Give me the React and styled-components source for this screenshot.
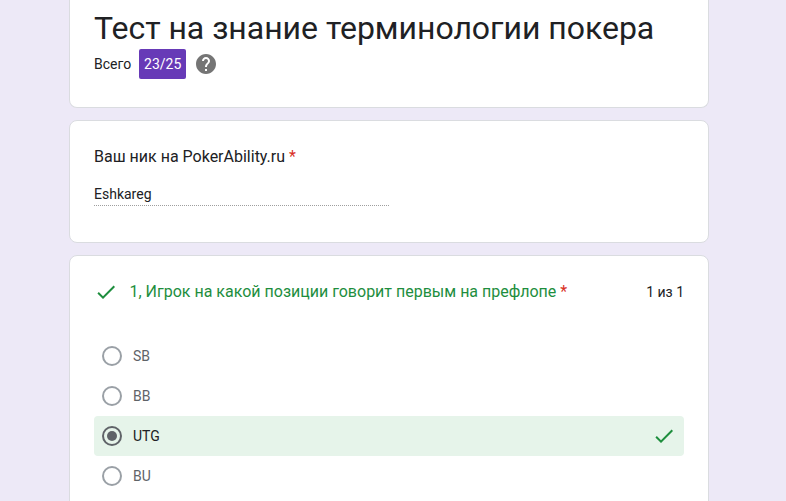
import React from 'react'
import styled, { createGlobalStyle } from 'styled-components'

const GlobalStyle = createGlobalStyle`
  html, body {
    margin: 0;
    height: 100%;
    overflow: hidden;
    background: #ede9f7;
  }
  body {
    font-family: Roboto, "Liberation Sans", sans-serif;
    color: #202124;
  }
`

const Page = styled.div`
  width: 640px;
  margin-left: 69px;
  display: flex;
  flex-direction: column;
  gap: 12px;
`

const Card = styled.section`
  background: #fff;
  border: 1px solid #dadce0;
  border-radius: 8px;
  box-sizing: border-box;
  padding: 0 24px;
`

const HeaderCard = styled(Card)`
  height: 108px;
  border-top: 0;
  border-radius: 0 0 8px 8px;
  padding-top: 9px;
`

const Title = styled.h1`
  margin: 0;
  font-size: 32px;
  font-weight: 400;
  line-height: 38px;
  letter-spacing: -0.03px;
`

const ScoreRow = styled.div`
  display: flex;
  align-items: center;
  margin-top: 2px;
  font-size: 14px;
`

const Badge = styled.span`
  height: 30px;
  width: 47px;
  margin-left: 8px;
  margin-right: 8px;
  display: flex;
  align-items: center;
  justify-content: center;
  border-radius: 2px;
  background: #673ab7;
  color: #fff;
`

const NameCard = styled(Card)`
  height: 123px;
  padding-top: 24px;
`

const Label = styled.div`
  font-size: 16px;
  line-height: 24px;
`

const Star = styled.span`
  color: #d93025;
`

const Answer = styled.div`
  width: 295px;
  height: 23px;
  margin-top: 13px;
  font-size: 14px;
  line-height: 24px;
  box-sizing: content-box;
  border-bottom: 1px dotted rgba(0, 0, 0, 0.38);
`

const QuestionCard = styled(Card)`
  padding-top: 24px;
  padding-bottom: 24px;
`

const QuestionHead = styled.div`
  display: flex;
  align-items: center;
  height: 24px;
  margin-bottom: 32px;
`

const QuestionText = styled.div`
  flex: 1;
  margin-left: 11.5px;
  padding-bottom: 2px;
  font-size: 16px;
  color: #1e8e3e;
`

const Points = styled.div`
  font-size: 14px;
`

const Option = styled.div`
  display: flex;
  align-items: center;
  height: 40px;
  padding: 0 8px;
  border-radius: 4px;
  font-size: 14px;
  color: ${p => (p.$correct ? '#202124' : '#5f6368')};
  background: ${p => (p.$correct ? '#e6f4ea' : 'transparent')};
`

const Radio = styled.span`
  width: 20px;
  height: 20px;
  box-sizing: border-box;
  border: 2px solid ${p => (p.$checked ? '#5f6368' : '#9aa0a6')};
  border-radius: 50%;
  margin-right: 11px;
  display: flex;
  align-items: center;
  justify-content: center;

  &::after {
    content: '';
    display: ${p => (p.$checked ? 'block' : 'none')};
    width: 10px;
    height: 10px;
    border-radius: 50%;
    background: #5f6368;
  }
`

const OptionText = styled.span`
  flex: 1;
`

const CheckIcon = () => (
  <svg width="24" height="24" viewBox="0 0 24 24" fill="#1e8e3e">
    <path d="M9 16.17L4.83 12l-1.42 1.41L9 19 21 7l-1.41-1.41z" />
  </svg>
)

const HelpIcon = () => (
  <svg width="24" height="24" viewBox="0 0 24 24" fill="#757575">
    <path d="M12 2C6.48 2 2 6.48 2 12s4.48 10 10 10 10-4.48 10-10S17.52 2 12 2zm1 17h-2v-2h2v2zm2.07-7.75l-.9.92C13.45 12.9 13 13.5 13 15h-2v-.5c0-1.1.45-2.1 1.17-2.83l1.24-1.26c.37-.36.59-.86.59-1.41 0-1.1-.9-2-2-2s-2 .9-2 2H8c0-2.21 1.79-4 4-4s4 1.79 4 4c0 .88-.36 1.68-.93 2.25z" />
  </svg>
)

const options = [
  { name: 'SB' },
  { name: 'BB' },
  { name: 'UTG', correct: true },
  { name: 'BU' }
]

export default function App () {
  return <>
    <GlobalStyle />
    <Page>
      <HeaderCard>
        <Title>Тест на знание терминологии покера</Title>
        <ScoreRow>
          Всего
          <Badge>23/25</Badge>
          <HelpIcon />
        </ScoreRow>
      </HeaderCard>

      <NameCard>
        <Label>Ваш ник на PokerAbility.ru <Star>*</Star></Label>
        <Answer>Eshkareg</Answer>
      </NameCard>

      <QuestionCard>
        <QuestionHead>
          <CheckIcon />
          <QuestionText>1, Игрок на какой позиции говорит первым на префлопе <Star>*</Star></QuestionText>
          <Points>1 из 1</Points>
        </QuestionHead>
        {options.map(o => (
          <Option key={o.name} $correct={o.correct}>
            <Radio $checked={o.correct} />
            <OptionText>{o.name}</OptionText>
            {o.correct && <CheckIcon />}
          </Option>
        ))}
      </QuestionCard>
    </Page>
  </>
}
